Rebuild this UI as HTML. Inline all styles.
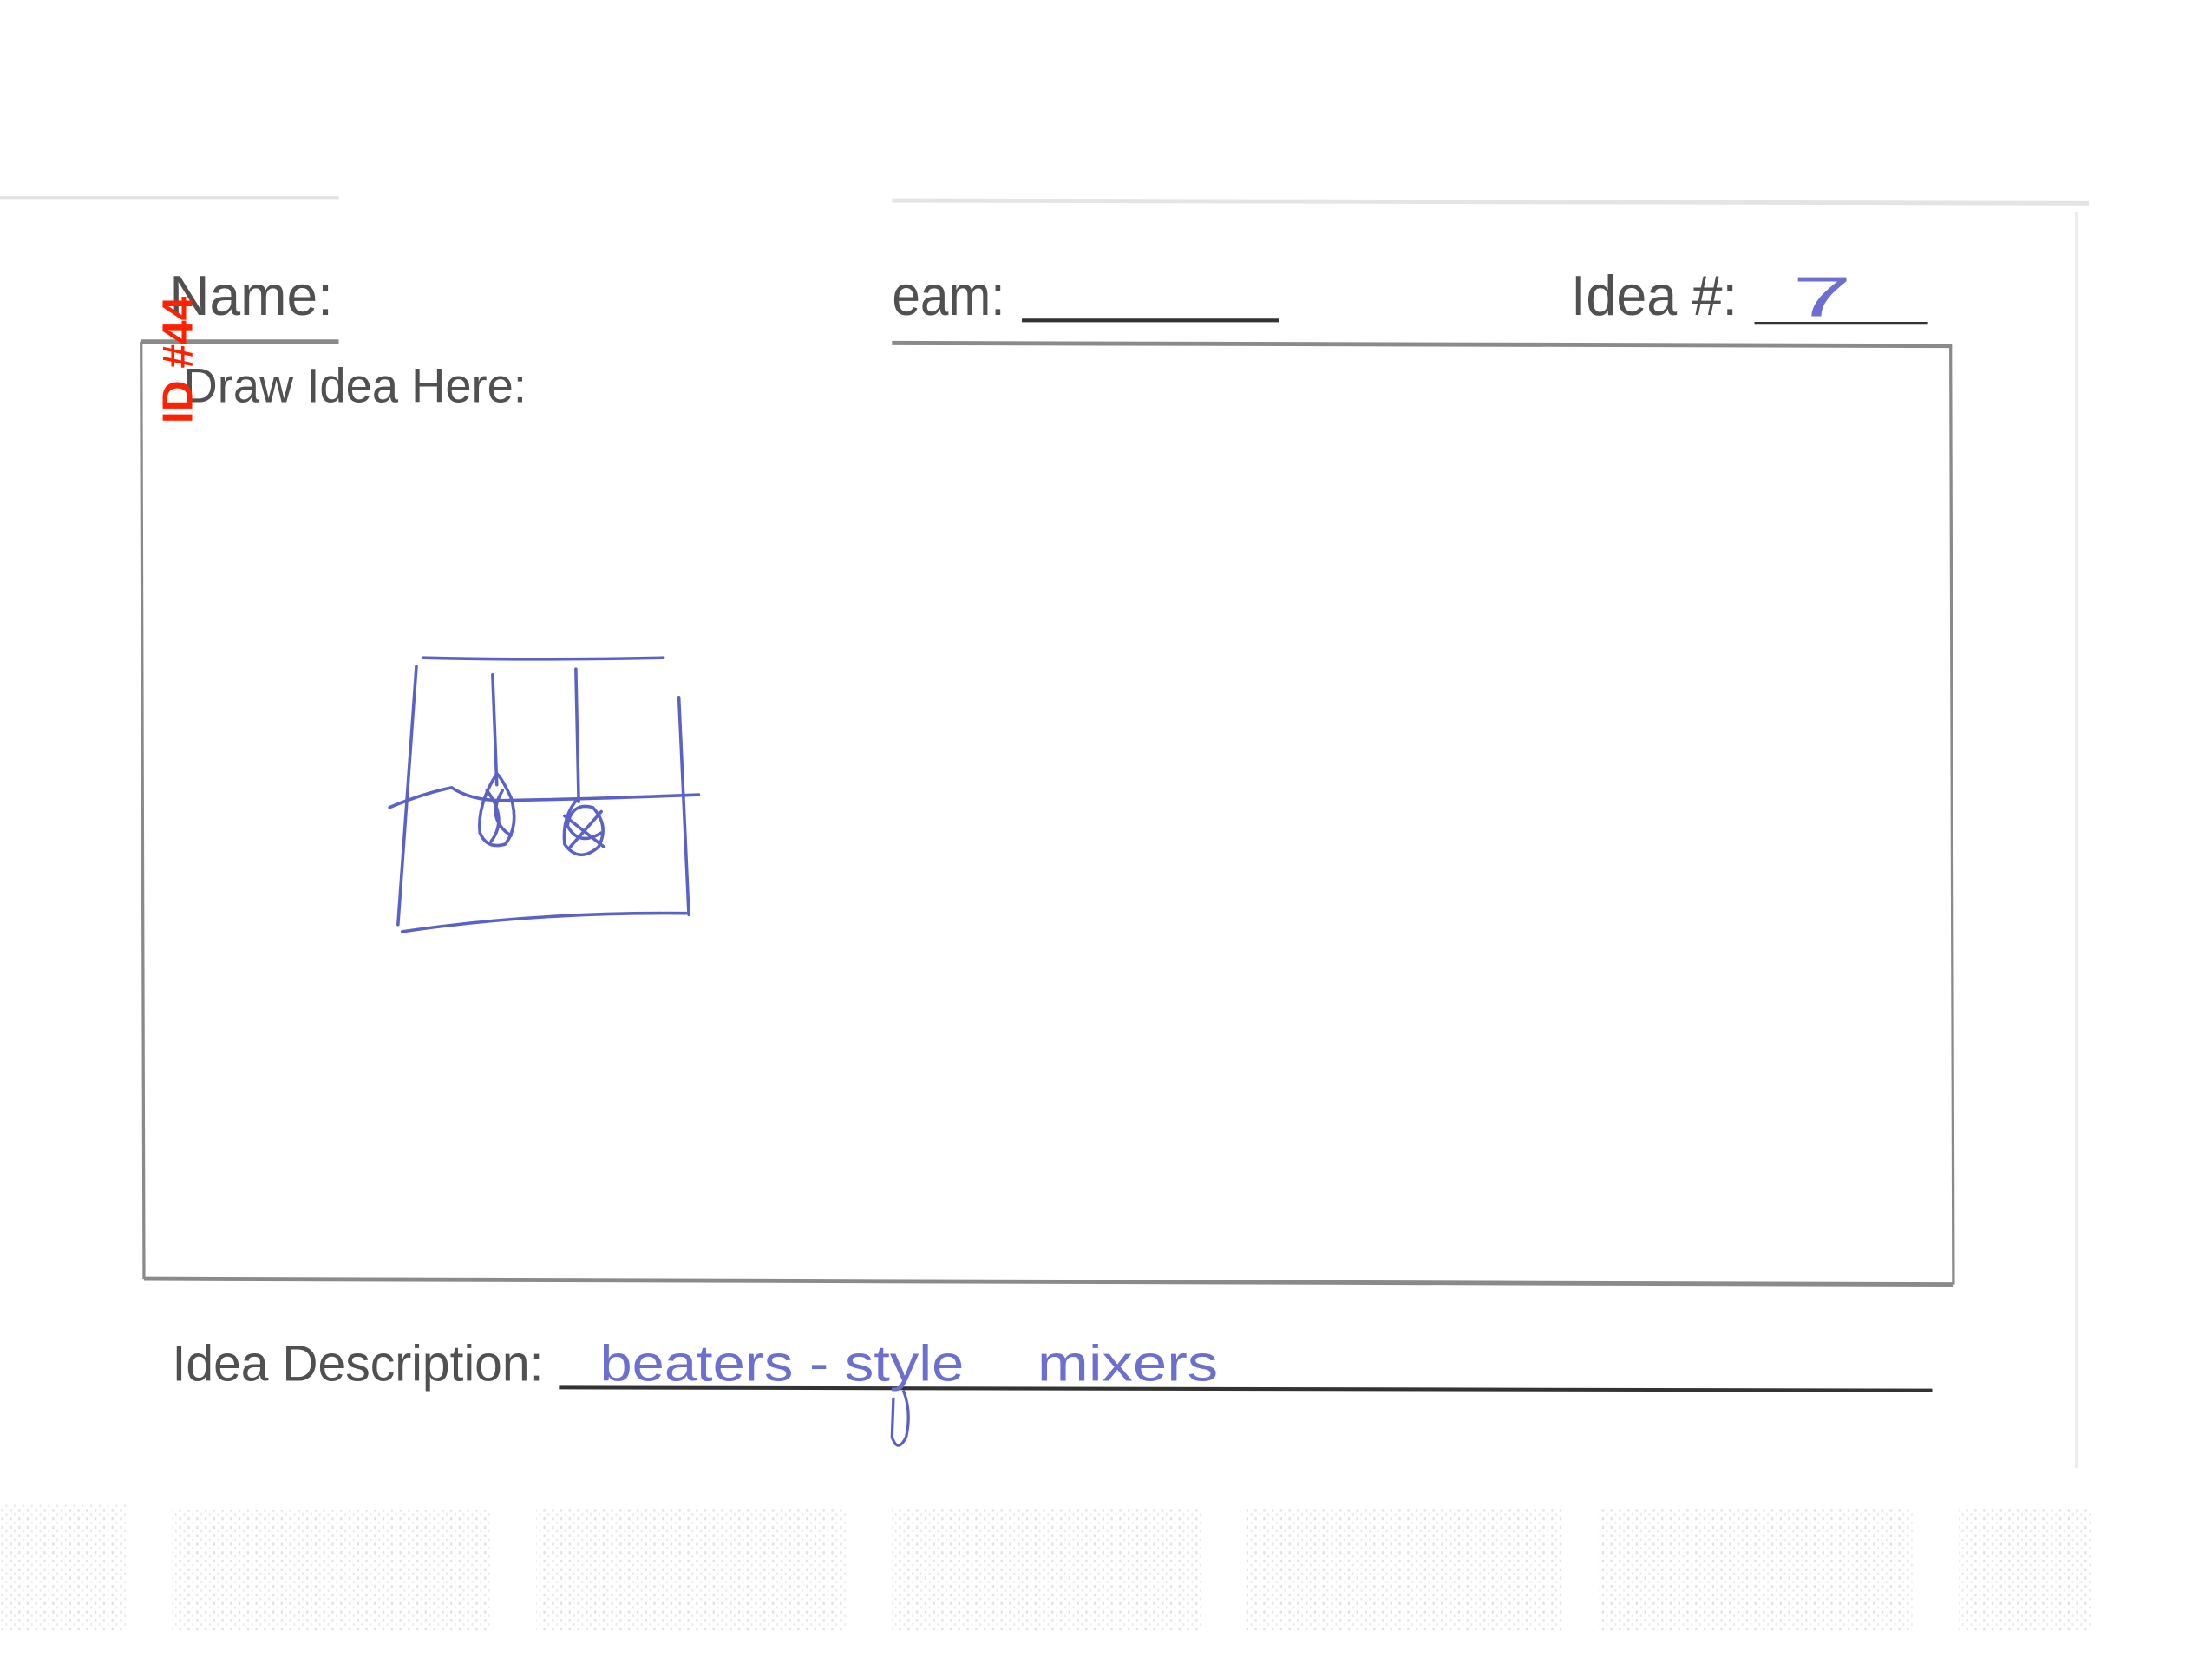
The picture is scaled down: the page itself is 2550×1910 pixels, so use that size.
<!DOCTYPE html>
<html><head><meta charset="utf-8"><style>
html,body{margin:0;padding:0;background:#fff;}
svg{display:block}
</style></head><body>
<svg width="2550" height="1910" viewBox="0 0 1567.2 1173.9" preserveAspectRatio="none" xmlns="http://www.w3.org/2000/svg">
<defs>
<pattern id="dots" width="6" height="6" patternUnits="userSpaceOnUse">
<rect x="1" y="1" width="1.4" height="2" fill="#c8c8c8"/>
<rect x="4" y="4" width="1.2" height="1.6" fill="#d6d6d6"/>
</pattern>
</defs>
<rect width="1567.2" height="1173.9" fill="#fff"/>
<line x1="0" y1="140" x2="240" y2="140" stroke="#e2e2e2" stroke-width="2"/>
<line x1="632" y1="142" x2="1480" y2="144" stroke="#e4e4e4" stroke-width="3"/>
<line x1="1471" y1="150" x2="1471" y2="1040" stroke="#ececec" stroke-width="2"/>
<g opacity="0.55">
<rect x="0" y="1065" width="90" height="90" fill="url(#dots)"/>
<rect x="122" y="1070" width="225" height="85" fill="url(#dots)"/>
<rect x="380" y="1068" width="220" height="87" fill="url(#dots)"/>
<rect x="632" y="1068" width="220" height="87" fill="url(#dots)"/>
<rect x="882" y="1068" width="225" height="87" fill="url(#dots)"/>
<rect x="1133" y="1068" width="222" height="87" fill="url(#dots)"/>
<rect x="1388" y="1068" width="95" height="87" fill="url(#dots)"/>
</g>
<g font-family="Liberation Sans, sans-serif" fill="#505050">
<text x="120" y="223" font-size="40" textLength="116" lengthAdjust="spacingAndGlyphs">Name:</text>
<text x="632" y="223" font-size="40" textLength="80" lengthAdjust="spacingAndGlyphs">eam:</text>
<text x="1113" y="223" font-size="40" textLength="118" lengthAdjust="spacingAndGlyphs">Idea #:</text>
<text x="130" y="285" font-size="34" textLength="243" lengthAdjust="spacingAndGlyphs">Draw Idea Here:</text>
<text x="122" y="978" font-size="36" textLength="263" lengthAdjust="spacingAndGlyphs">Idea Description:</text>
</g>
<line x1="724" y1="227" x2="906" y2="227" stroke="#333" stroke-width="2.5"/>
<line x1="1243" y1="229" x2="1366" y2="229" stroke="#333" stroke-width="2"/>
<line x1="396" y1="983" x2="1369" y2="985" stroke="#333" stroke-width="2.5"/>
<g stroke="#8a8a8a" fill="none">
<line x1="100" y1="242" x2="240" y2="242" stroke-width="3"/>
<line x1="632" y1="243" x2="1383" y2="245" stroke-width="3"/>
<line x1="100" y1="242" x2="102" y2="906" stroke-width="2"/>
<line x1="1382" y1="245" x2="1384" y2="910" stroke-width="2"/>
<line x1="102" y1="906" x2="1384" y2="910" stroke-width="3"/>
</g>
<text transform="translate(136,300) rotate(-90)" font-family="Liberation Sans, sans-serif" font-weight="bold" font-size="30" fill="#ff2000" textLength="90" lengthAdjust="spacingAndGlyphs">ID #44</text>
<g fill="#6a6fd0" font-family="Liberation Sans, sans-serif">
<text x="1270" y="224" font-size="40" textLength="42" lengthAdjust="spacingAndGlyphs">7</text>
<text x="425" y="978" font-size="36" textLength="258" lengthAdjust="spacingAndGlyphs">beaters - style</text>
<text x="735" y="978" font-size="36" textLength="128" lengthAdjust="spacingAndGlyphs">mixers</text>
</g>
<path d="M640 985 Q646 1000 642 1018 Q636 1030 632 1018 L633 990" stroke="#5a5fc8" stroke-width="2" fill="none"/>
<g stroke="#5a62c8" stroke-width="2.2" fill="none" stroke-linecap="round">
<path d="M300 466 Q380 468 470 466"/>
<path d="M295 472 L282 655"/>
<path d="M481 494 L488 648"/>
<path d="M285 660 Q380 646 486 647"/>
<path d="M349 478 L352 556"/>
<path d="M408 474 L410 568"/>
<path d="M276 572 Q300 562 320 558 Q335 568 360 567 Q420 566 495 563"/>
<path d="M352 548 Q338 570 340 590 Q345 602 358 598 Q368 585 362 565 Q356 552 352 548 M345 560 Q360 580 348 596 M356 560 Q344 580 362 592"/>
<path d="M410 565 Q398 578 400 598 Q410 612 424 600 Q432 585 420 572 Q405 568 402 585 Q410 600 426 590 M404 600 L426 575 M400 578 L428 600"/>
</g>
</svg>
</body></html>
